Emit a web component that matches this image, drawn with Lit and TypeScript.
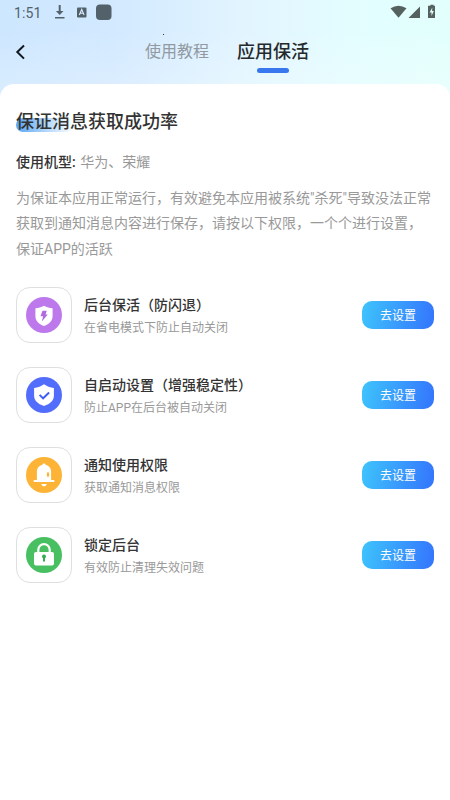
import { LitElement, html, css, svg } from "lit";
import { customElement } from "lit/decorators.js";

const shieldBolt = svg`
  <circle cx="18" cy="18" r="18" fill="#bd79ec"/>
  <path d="M18 8.700c2.800 1.700 5.600 2.400 8.600 2.600v7.600c0 4.600-3.200 7.900-8.600 10-5.400-2.100-8.600-5.400-8.600-10v-7.600c3-.2 5.800-.9 8.600-2.600z" fill="#fff"/>
  <path d="M16.500 13.800h4.300l-1.300 3.700h2.300l-6 7 1.300-5.200h-2.600z" fill="#b06ae0"/>`;
const shieldCheck = svg`
  <circle cx="18" cy="18" r="18" fill="#526dfb"/>
  <path d="M18 7.300c2.700 2 6 3.300 9.900 3.800v7.500c0 4.900-3.500 8.500-9.900 10.400-6.400-1.900-9.900-5.500-9.900-10.400v-7.500c3.900-.5 7.200-1.800 9.900-3.800z" fill="#fff"/>
  <path d="M13.600 17.800l3.500 3.500 6-5.800" fill="none" stroke="#3f5df0" stroke-width="1.900"/>`;
const bell = svg`
  <circle cx="18" cy="18" r="18" fill="#fdb436"/>
  <path d="M16.300 7.800a1.800 1.800 0 0 1 3.400 0c3.300.8 5.400 3.500 5.400 7v8.200h2.400a.9.900 0 0 1 0 2h-19a.9.900 0 0 1 0-2h2.400v-8.200c0-3.500 2.100-6.200 5.400-7z" fill="#fff"/>
  <path d="M15.200 27h5.600c-.5 1.500-1.500 2.300-2.800 2.300s-2.300-.8-2.800-2.300z" fill="#fff"/>
  <ellipse cx="22" cy="17.600" rx="1.200" ry="2.500" fill="#fdb436"/>`;
const lock = svg`
  <circle cx="18" cy="18" r="18" fill="#48c062"/>
  <path d="M12.300 16v-3.200a5.700 5.700 0 0 1 11.400 0V16" fill="none" stroke="#fff" stroke-width="2.200"/>
  <rect x="8" y="15" width="20" height="13.500" rx="2" fill="#fff"/>
  <path d="M16 19.600a2 2 0 1 1 4 0c0 .8-.4 1.300-1 1.700v3.300h-2v-3.300c-.6-.4-1-.9-1-1.700z" fill="#32ad50"/>`;

const items = [
  { icon: shieldBolt, title: "后台保活（防闪退）", note: "在省电模式下防止自动关闭" },
  { icon: shieldCheck, title: "自启动设置（增强稳定性）", note: "防止APP在后台被自动关闭" },
  { icon: bell, title: "通知使用权限", note: "获取通知消息权限" },
  { icon: lock, title: "锁定后台", note: "有效防止清理失效问题" },
];

@customElement("app-root")
export class AppRoot extends LitElement {
  static styles = css`
    :host {
      display: block;
      height: 800px;
      overflow: hidden;
      font-family: Roboto, "Noto Sans CJK SC", sans-serif;
      color: #333;
      background: #fff;
    }
    * { box-sizing: border-box; }
    svg { display: block; flex: none; }
    .page {
      height: 100%;
      background:
        linear-gradient(180deg, rgba(255,255,255,0) 30px, rgba(255,255,255,.3) 110px) 0 0 / 100% 110px no-repeat,
        linear-gradient(90deg, #cde7ff 0%, #d2e9ff 25%, #e2f5ff 55%, #e3fdff 78%, #e2fffc 100%);
    }
    .status {
      height: 24px;
      padding: 0 13px 0 14px;
      display: flex;
      align-items: center;
      color: #53616b;
    }
    .time { font: 14px/24px Roboto, sans-serif; width: 40px; letter-spacing: .1px; padding-top: 2px; }
    .spacer { flex: 1; }
    .nav { height: 60px; display: grid; grid-template-columns: 145px 92px 72px; position: relative; }
    .back { padding: 20px 0 0 15px; }
    .tab { font-size: 16px; line-height: 24px; padding-top: 16px; color: #92999f; white-space: nowrap; }
    .tab.active { font-size: 18px; font-weight: 500; color: #26292b; }
    .line { width: 32px; height: 5px; border-radius: 2.5px; background: #3877ee; margin: 4px auto 0; }
    .dot { position: absolute; left: 163px; top: 10px; width: 1px; height: 1px; background: #334; }
    .sheet { height: 716px; background: #fff; border-radius: 14px 14px 0 0; padding: 25px 16px 0; }
    .heading { position: relative; font-size: 18px; line-height: 26px; font-weight: 500; width: max-content; }
    .mark {
      position: absolute; left: 0; top: 9px; width: 58px; height: 14px; border-radius: 7px;
      background: linear-gradient(90deg, #5ba5f2, rgba(120,185,250,.6) 50%, rgba(160,205,255,0));
    }
    .heading span { position: relative; }
    .model { font-size: 14px; line-height: 20px; margin-top: 17px; color: #999; }
    .model b { font-weight: 500; color: #333; margin-right: 1px; }
    .desc { font-size: 14px; line-height: 25.5px; margin-top: 13.500px; color: #999; white-space: nowrap; }
    .list { display: grid; gap: 24px; margin-top: 25px; }
    .row { height: 56px; display: flex; align-items: center; }
    .tile {
      width: 56px; height: 56px; border: 1px solid #dedfe1; border-radius: 14px;
      display: grid; place-items: center; flex: none;
    }
    .text { flex: 1; margin-left: 12px; padding-top: 1px; }
    .title { font-size: 14px; line-height: 22px; font-weight: 500; white-space: nowrap; }
    .note { font-size: 12px; line-height: 20px; color: #999; margin-top: 2px; }
    .go {
      width: 72px; height: 28px; border: 0; padding: 0; border-radius: 10px; color: #fff;
      font: 12px/28px "Noto Sans CJK SC", sans-serif;
      background: linear-gradient(100deg, #3ec4fd, #3474fd);
    }
  `;

  render() {
    return html`
      <div class="page">
        <div class="status">
          <div class="time">1:51</div>
          <svg width="60" height="24" viewBox="0 0 60 24" fill="#53616b">
            <path d="M4.700 5h2v6h2.800l-3.800 4-3.800-4h2.800zM1 17h9.500v1.500H1z"/>
            <rect x="23" y="7.500" width="9.500" height="10" rx="1"/>
            <path d="M25.300 15l2.400-5.500 2.400 5.500M26.200 13.300h3" fill="none" stroke="#dcecff" stroke-width="1.100"/>
            <rect x="42" y="4.500" width="15.500" height="15.500" rx="4"/>
          </svg>
          <div class="spacer"></div>
          <svg width="48" height="24" viewBox="0 0 48 24" fill="#55615f">
            <path d="M1.500 8.300q8-5 16 0l-8 9.500z"/>
            <path d="M31 6.500V18H19.500z"/>
            <path d="M40 5.800h1.400V4.700h3.200v1.100H46V18h-7V5.800z"/>
            <path d="M43.300 7.500l-2.700 5h1.900v3.400l2.400-4.800h-1.800z" fill="#e0fcfc"/>
          </svg>
        </div>
        <div class="nav">
          <div class="back">
            <svg width="12" height="16" viewBox="0 0 12 16"><path d="M9 1.500L2.300 8 9 14.600" fill="none" stroke="#111820" stroke-width="2"/></svg>
          </div>
          <div class="tab">使用教程</div>
          <div class="tab active">应用保活<div class="line"></div></div>
          <i class="dot"></i>
        </div>
        <div class="sheet">
          <div class="heading"><i class="mark"></i><span>保证消息获取成功率</span></div>
          <div class="model"><b>使用机型:</b> 华为、荣耀</div>
          <div class="desc">为保证本应用正常运行，有效避免本应用被系统"杀死"导致没法正常<br>获取到通知消息内容进行保存，请按以下权限，一个个进行设置，<br>保证APP的活跃</div>
          <div class="list">
            ${items.map((item) => html`
              <div class="row">
                <div class="tile"><svg width="36" height="36" viewBox="0 0 36 36">${item.icon}</svg></div>
                <div class="text"><div class="title">${item.title}</div><div class="note">${item.note}</div></div>
                <button class="go">去设置</button>
              </div>`)}
          </div>
        </div>
      </div>`;
  }
}
